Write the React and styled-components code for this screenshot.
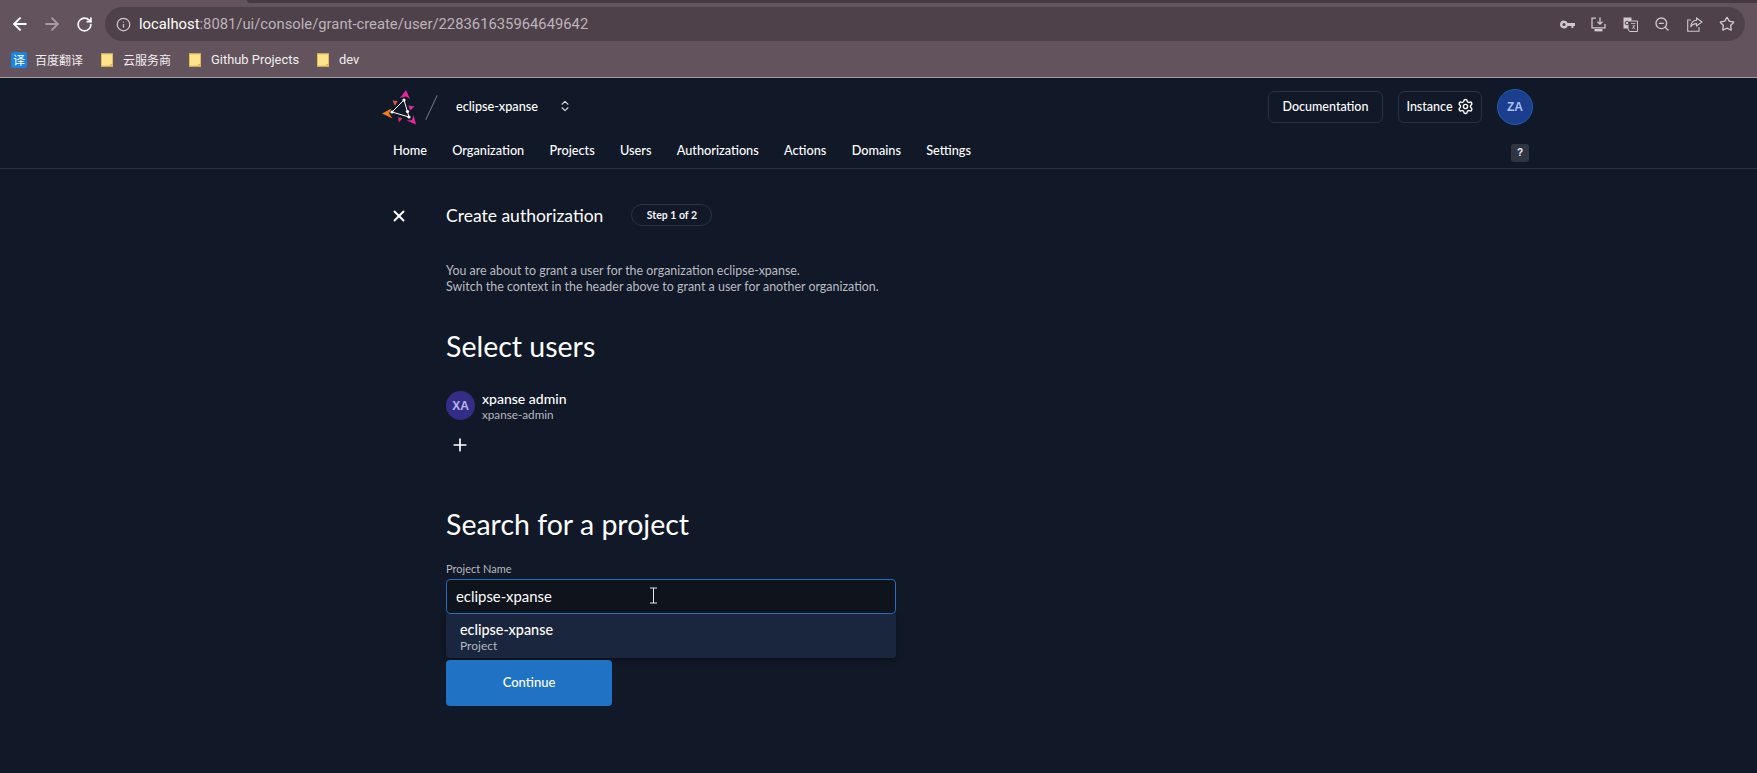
import React from "react";
import styled, { createGlobalStyle } from "styled-components";
import { ArrowLeft, ArrowRight, RotateCw, Info, ZoomOut, Star, Settings, X, Plus, ChevronsUpDown } from "lucide-react";

const Global = createGlobalStyle`
  html, body { margin: 0; padding: 0; background: #111827; }
  body { font-family: Lato, "Noto Sans", sans-serif; color: #fff; }
  * { box-sizing: border-box; }
`;

const Page = styled.div`
  width: 1757px;
  height: 773px;
  overflow: hidden;
  background: #111827;
`;

const Chrome = styled.div`
  height: 78px;
  background: #63535d;
  border-bottom: 1px solid #a89ca4;
`;

const TabStrip = styled.div`
  height: 3px;
  margin-left: 247px;
  background: #463a42;
  border-bottom-left-radius: 3px;
`;

const Toolbar = styled.div`
  display: flex;
  align-items: center;
  height: 34px;
  margin-top: 4px;
  padding-left: 9px;
  padding-right: 12px;
`;

const NavIcon = styled.span`
  display: flex;
  justify-content: center;
  width: 22px;
  margin-right: ${(p) => p.$gap}px;
  color: ${(p) => p.$color};
`;

const Omnibox = styled.div`
  flex: 1;
  height: 34px;
  margin-left: 10px;
  border-radius: 17px;
  background: #4e4149;
  display: flex;
  align-items: center;
  padding: 0 10px 0 11px;
`;

const Url = styled.div`
  flex: 1;
  margin-left: 8px;
  font-family: Roboto, sans-serif;
  font-size: 14.8px;
  color: #bdb4ba;
  b {
    font-weight: 400;
    color: #fff;
  }
`;

const OmniIcons = styled.div`
  display: flex;
  align-items: center;
  gap: 16.5px;
  color: #cfc8cd;
`;

const Bookmarks = styled.div`
  display: flex;
  align-items: center;
  height: 36px;
  padding: 1px 0 0 11px;
  font-family: Roboto, "Noto Sans CJK SC", sans-serif;
  color: #f1eef0;
`;

const Bookmark = styled.div`
  display: flex;
  align-items: center;
  gap: ${(p) => p.$gap}px;
  margin-right: 18px;
  font-size: ${(p) => p.$size}px;
`;

const TranslateBadge = styled.span`
  width: 16px;
  height: 16px;
  border-radius: 2px;
  background: #1a83e6;
  color: #fff;
  font-size: 12px;
  line-height: 16px;
  text-align: center;
  font-family: "Noto Sans CJK SC", sans-serif;
`;

const Header = styled.header`
  height: 91px;
  padding: 0 224px 0 377px;
  border-bottom: 1px solid #2b313e;
`;

const TopRow = styled.div`
  display: flex;
  align-items: center;
  height: 58px;
`;

const Slash = styled.span`
  width: 1px;
  height: 27px;
  margin: 0 0 0 12px;
  background: #6b7280;
  transform: rotate(25deg);
`;

const OrgName = styled.span`
  margin: 0 0 2px 24px;
  font-size: 12.7px;
  font-weight: 500;
  color: #fff;
`;

const OrgSwitch = styled.span`
  display: flex;
  margin: 0 0 2px 20px;
  color: #d1d5db;
`;

const Spacer = styled.div`
  flex: 1;
`;

const OutlineButton = styled.button`
  display: flex;
  align-items: center;
  justify-content: center;
  gap: 4px;
  height: 32px;
  width: ${(p) => p.$width}px;
  margin-right: 15px;
  padding: 0 0 2px;
  background: transparent;
  border: 1px solid #2b3140;
  border-radius: 6px;
  color: #fff;
  font: 500 12.5px Lato, sans-serif;
`;

const Avatar = styled.div`
  display: flex;
  align-items: center;
  justify-content: center;
  flex: none;
  width: ${(p) => p.$size}px;
  height: ${(p) => p.$size}px;
  border-radius: 50%;
  background: ${(p) => p.$bg};
  border: ${(p) => (p.$ring ? `1px solid ${p.$ring}` : "none")};
  color: ${(p) => p.$fg};
  font: 700 12px "Liberation Sans", sans-serif;
`;

const NavRow = styled.nav`
  display: flex;
  align-items: center;
  height: 28px;
  padding-left: 16px;
  gap: 25.3px;
`;

const NavLink = styled.a`
  font-size: 12.7px;
  font-weight: 500;
  color: #fff;
`;

const HelpChip = styled.span`
  width: 18px;
  height: 18px;
  margin: 6px 4px 0 0;
  border-radius: 3px;
  background: #2f3542;
  color: #f3f4f6;
  font: 700 10px/18px "Liberation Sans", sans-serif;
  text-align: center;
`;

const Main = styled.main`
  padding: 23px 0 0 390px;
`;

const TitleRow = styled.div`
  display: flex;
  align-items: center;
  height: 46px;
`;

const CloseBox = styled.span`
  display: flex;
  width: 56px;
  padding-top: 1px;
`;

const Title = styled.h1`
  margin: 0;
  font-size: 17.5px;
  font-weight: 400;
  color: #fff;
`;

const StepChip = styled.span`
  margin-left: 28px;
  width: 81px;
  height: 22px;
  border: 1px solid #2b3140;
  border-radius: 11px;
  font-size: 10.5px;
  font-weight: 700;
  line-height: 20px;
  text-align: center;
  color: #f3f4f6;
`;

const Body = styled.div`
  width: 506px;
  padding-left: 56px;
`;

const Description = styled.p`
  margin: 25px 0 0;
  font-size: 12.45px;
  line-height: 15.5px;
  color: #b9bcc3;
`;

const Heading = styled.h2`
  margin: ${(p) => p.$top}px 0 0;
  font-size: 28.5px;
  font-weight: 400;
  line-height: 36px;
  color: #fff;
`;

const UserRow = styled.div`
  display: flex;
  align-items: center;
  gap: 7px;
  margin-top: 26px;
`;

const UserText = styled.div`
  display: flex;
  flex-direction: column;
`;

const UserName = styled.span`
  font-size: 14px;
  line-height: 17px;
  font-weight: 500;
  color: #fff;
`;

const UserLogin = styled.span`
  font-size: 11.7px;
  line-height: 14px;
  color: #b4b8c0;
`;

const AddButton = styled.span`
  display: flex;
  margin: 14px 0 0 4px;
  color: #fff;
`;

const FieldLabel = styled.label`
  display: block;
  margin-top: 20px;
  font-size: 11px;
  line-height: 14px;
  color: #b4b8c0;
`;

const InputWrap = styled.div`
  position: relative;
  height: 35px;
  margin-top: 3px;
  width: 450px;
  background: #0e131c;
  border: 1px solid #1f6fc0;
  border-radius: 4px;
  padding-left: 9px;
  font-size: 14.9px;
  line-height: 33px;
  color: #fff;
`;

const TextCursor = styled.svg`
  position: absolute;
  left: 202px;
  top: 7px;
`;

const Option = styled.div`
  width: 450px;
  height: 44px;
  padding: 6px 14px 0;
  background: #1a263d;
  border-radius: 0 0 4px 4px;
  box-shadow: 0 2px 6px rgba(0, 0, 0, 0.35);
`;

const OptionName = styled.div`
  font-size: 14.4px;
  line-height: 19px;
  font-weight: 500;
  color: #fff;
`;

const OptionType = styled.div`
  font-size: 12px;
  line-height: 14px;
  color: #b4b8c0;
`;

const ContinueButton = styled.button`
  display: block;
  width: 166px;
  height: 46px;
  margin-top: 2px;
  padding: 0 0 2px;
  border: none;
  border-radius: 4px;
  background: #2073c4;
  color: #fff;
  font: 500 13px Lato, sans-serif;
`;

const Logo = () => (
  <svg width="42" height="42" viewBox="2 1 42 42" fill="none">
    <path d="M25 13 L31 5 L35 14 L31 11.5 Z" fill="#e6259e" />
    <path d="M7 28.500 L16.500 23.500 L14 28.500 L17.500 33.500 Z" fill="#f47a1c" />
    <path d="M41 39.500 L31.500 35.500 L37 35 L38.500 30 Z" fill="#e6259e" />
    <path d="M17.500 15.500 L22.500 16 L20 21 Z" fill="#d9534f" />
    <path d="M33.500 20.500 L39.500 21.500 L35 25.500 Z" fill="#e6259e" />
    <path d="M23 32.500 L27.500 33 L24 37.500 Z" fill="#d9346e" />
    <path d="M29 15 L17 27 L34 32 L29 15 Z" stroke="#fff" strokeWidth="1" />
    <circle cx="29" cy="15" r="1.6" fill="#fff" />
    <circle cx="17" cy="27" r="1.6" fill="#fff" />
    <circle cx="34" cy="32" r="1.6" fill="#fff" />
    <circle cx="32.500" cy="26.500" r="1.6" fill="#fff" />
  </svg>
);

const KeyIcon = () => (
  <svg width="15" height="15" viewBox="0 0 15 15" fill="currentColor">
    <path d="M4 3.500a4 4 0 0 1 3.700 2.500H15v3h-1.600v2h-2V9H7.700A4 4 0 1 1 4 3.500Zm0 2.400a1.600 1.600 0 1 0 0 3.200 1.600 1.600 0 0 0 0-3.200Z" />
  </svg>
);

const InstallIcon = () => (
  <svg width="15" height="15" viewBox="0 0 15 15" fill="none" stroke="currentColor" strokeWidth="1.3">
    <path d="M5 1.200H1v9.600h13V7" />
    <path d="M9 0.500v6.500M6.500 4.700 9 7.200l2.500-2.500" />
    <path d="M3.500 13.200h8" strokeWidth="2.4" />
  </svg>
);

const TranslateIcon = () => (
  <svg width="15" height="15" viewBox="0 0 15 15" fill="none">
    <path d="M0.500 0.500h8v11h-8z" fill="currentColor" />
    <path d="M5 4h9.500v10.500H6.500L5 12z" stroke="currentColor" strokeWidth="1" fill="#4e4149" />
    <circle cx="4" cy="6" r="1.8" stroke="#4e4149" strokeWidth="1" />
    <path d="M8 6.500h4.500M10 8l1.500 4M12 8l-3 4" stroke="currentColor" strokeWidth="0.8" />
  </svg>
);

const ShareIcon = () => (
  <svg width="16" height="15" viewBox="0 0 16 15" fill="none" stroke="currentColor" strokeWidth="1.1">
    <path d="M4 3H0.700v11.300H12V10" />
    <path d="M9.500 1 15 5l-5.500 4V6.600C7 6.600 5 7.500 3.700 10 4 6 6 3.500 9.500 3.300Z" />
  </svg>
);

const FolderIcon = () => (
  <svg width="12" height="14" viewBox="0 0 12 14">
    <path d="M0 0.500h12v13H0z" fill="#fde38c" />
    <path d="M0.500 1h11v12h-11z" fill="none" stroke="#e2bd55" strokeWidth="1" />
    <path d="M9 13.500v-2.500h3v2.500z" fill="#e2bd55" />
  </svg>
);

const navItems = ["Home", "Organization", "Projects", "Users", "Authorizations", "Actions", "Domains", "Settings"];

const App = () => (
  <Page>
    <Global />
    <Chrome>
      <TabStrip />
      <Toolbar>
        <NavIcon $gap={10} $color="#fff"><ArrowLeft size={20} strokeWidth={2.4} /></NavIcon>
        <NavIcon $gap={10} $color="#a89ca4"><ArrowRight size={20} strokeWidth={2.2} /></NavIcon>
        <NavIcon $gap={0} $color="#fff"><RotateCw size={17} strokeWidth={2.4} /></NavIcon>
        <Omnibox>
          <Info size={15} color="#cfc8cd" />
          <Url><b>localhost</b>:8081/ui/console/grant-create/user/228361635964649642</Url>
          <OmniIcons>
            <KeyIcon />
            <InstallIcon />
            <TranslateIcon />
            <ZoomOut size={16} />
            <ShareIcon />
            <Star size={16} />
          </OmniIcons>
        </Omnibox>
      </Toolbar>
      <Bookmarks>
        <Bookmark $gap={8} $size={12}><TranslateBadge>译</TranslateBadge>百度翻译</Bookmark>
        <Bookmark $gap={10} $size={12}><FolderIcon />云服务商</Bookmark>
        <Bookmark $gap={10} $size={12.9}><FolderIcon />Github Projects</Bookmark>
        <Bookmark $gap={10} $size={12.9}><FolderIcon />dev</Bookmark>
      </Bookmarks>
    </Chrome>

    <Header>
      <TopRow>
        <Logo />
        <Slash />
        <OrgName>eclipse-xpanse</OrgName>
        <OrgSwitch><ChevronsUpDown size={14} /></OrgSwitch>
        <Spacer />
        <OutlineButton $width={115}>Documentation</OutlineButton>
        <OutlineButton $width={84}>Instance <Settings size={17} /></OutlineButton>
        <Avatar $size={36} $bg="#1d3d8f" $ring="#1c5fb0" $fg="#a9c1f2">ZA</Avatar>
      </TopRow>
      <NavRow>
        {navItems.map((item) => <NavLink key={item}>{item}</NavLink>)}
        <Spacer />
        <HelpChip>?</HelpChip>
      </NavRow>
    </Header>

    <Main>
      <TitleRow>
        <CloseBox><X size={18} strokeWidth={2.5} /></CloseBox>
        <Title>Create authorization</Title>
        <StepChip>Step 1 of 2</StepChip>
      </TitleRow>
      <Body>
        <Description>
          You are about to grant a user for the organization eclipse-xpanse.
          <br />
          Switch the context in the header above to grant a user for another organization.
        </Description>
        <Heading $top={34}>Select users</Heading>
        <UserRow>
          <Avatar $size={29} $bg="#332d85" $fg="#b9b4f0">XA</Avatar>
          <UserText>
            <UserName>xpanse admin</UserName>
            <UserLogin>xpanse-admin</UserLogin>
          </UserText>
        </UserRow>
        <AddButton><Plus size={20} strokeWidth={2} /></AddButton>
        <Heading $top={51}>Search for a project</Heading>
        <FieldLabel>Project Name</FieldLabel>
        <InputWrap>
          eclipse-xpanse
          <TextCursor width="9" height="18" viewBox="0 0 9 18" fill="none" stroke="#e5e7eb" strokeWidth="1">
            <path d="M1 1h7M4.500 1v15M1 16h7" />
          </TextCursor>
        </InputWrap>
        <Option>
          <OptionName>eclipse-xpanse</OptionName>
          <OptionType>Project</OptionType>
        </Option>
        <ContinueButton>Continue</ContinueButton>
      </Body>
    </Main>
  </Page>
);

export default App;
